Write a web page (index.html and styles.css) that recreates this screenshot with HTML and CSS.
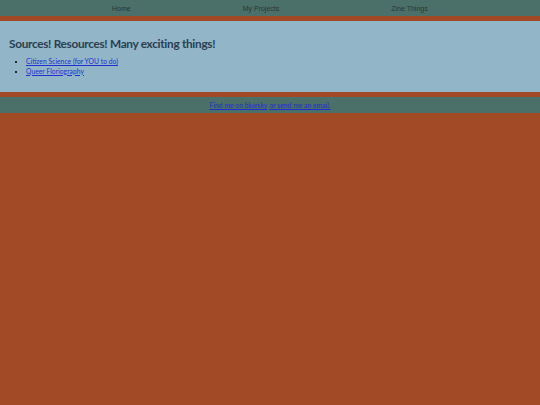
FILE: index.html
```html
<!DOCTYPE html>
<html lang="en">
<head>
<meta charset="utf-8">
<title>Sources</title>
<link rel="stylesheet" href="styles.css">
</head>
<body>
<nav class="topnav">
  <a class="navlink" href="#">Home</a>
  <a class="navlink" href="#">My Projects</a>
  <a class="navlink" href="#">Zine Things</a>
</nav>
<main class="content">
  <h1 class="title">Sources! Resources! Many exciting things!</h1>
  <ul class="links">
    <li><a href="#">Citizen Science (for YOU to do)</a></li>
    <li><a href="#">Queer Floriography</a></li>
  </ul>
</main>
<footer class="footer">
  <a href="#">Find me on bluesky</a> <a href="#">or send me an email.</a>
</footer>
</body>
</html>
```

FILE: styles.css
```css
html, body {
  margin: 0;
  padding: 0;
}
body {
  background: #a14a25;
  font-family: Lato, "Noto Sans", sans-serif;
  min-height: 405px;
}
.topnav {
  background: #4b7069;
  height: 16px;
  display: flex;
  align-items: center;
  gap: 112px;
  padding-left: 112px;
  margin-bottom: 5px;
}
.navlink {
  font-family: "Liberation Sans", Arial, sans-serif;
  font-size: 7px;
  color: #2e3433;
  text-decoration: none;
}
.content {
  background: #92b5c7;
  padding: 15px 8px 16px 9px;
}
.title {
  margin: 0;
  font-size: 11.8px;
  line-height: 16px;
  font-weight: 700;
  letter-spacing: -0.3px;
  color: #293f52;
}
.links {
  margin: 5px 0 0 0;
  padding-left: 17px;
  font-size: 6.8px;
  line-height: 9.5px;
}
.links a, .footer a {
  color: #1f2fd0;
}
.footer {
  background: #4b7069;
  margin-top: 5px;
  height: 16px;
  display: flex;
  align-items: center;
  justify-content: center;
  gap: 2px;
  font-size: 6.8px;
}
```
